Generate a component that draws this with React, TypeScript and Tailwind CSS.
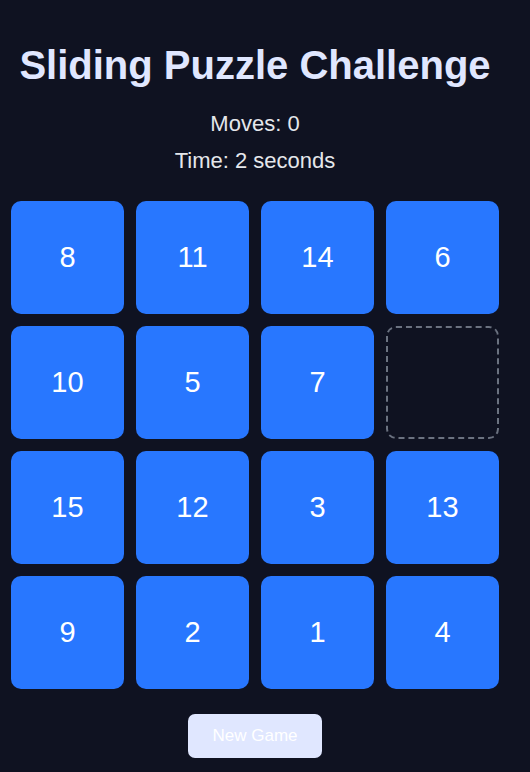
const tiles = [8, 11, 14, 6, 10, 5, 7, 0, 15, 12, 3, 13, 9, 2, 1, 4];

const App = () => {
  return (
    <div className="min-h-[772px] bg-[#0f1221] font-['Liberation_Sans',Arial,sans-serif]">
      <div className="flex w-[510px] flex-col items-center pt-[41px]">
        <h1 className="text-[40px] font-bold leading-[48px] text-[#e0e7ff]">Sliding Puzzle Challenge</h1>
        <div className="mt-[20px] text-[22px] leading-[30px] text-[#e5e7eb]">Moves: 0</div>
        <div className="mt-[7px] text-[22px] leading-[30px] text-[#e5e7eb]">Time: 2 seconds</div>
        <div className="mt-[25px] grid grid-cols-4 gap-3">
          {tiles.map((n) =>
            n === 0 ? (
              <div key={n} className="h-[113px] w-[113px] rounded-[10px] border-2 border-dashed border-[#6b7280]" />
            ) : (
              <div
                key={n}
                className="flex h-[113px] w-[113px] items-center justify-center rounded-[10px] bg-[#2877ff] text-[29px] text-white"
              >
                {n}
              </div>
            )
          )}
        </div>
        <button className="mt-[25px] h-[44px] w-[134px] rounded-[7px] bg-[#e0e7ff] text-[17px] text-white">
          New Game
        </button>
      </div>
    </div>
  );
};

export default App;
